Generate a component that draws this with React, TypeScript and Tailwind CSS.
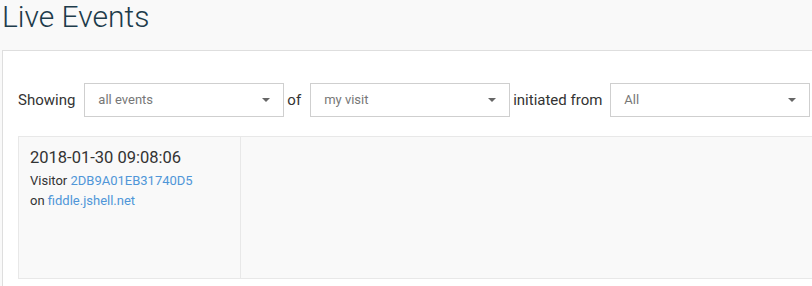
function Select({ value }: { value: string }) {
  return (
    <div className="w-[200px] h-[34px] border border-[#cfcfcf] bg-white flex items-center justify-between pl-[13px] pr-[13px] shrink-0">
      <span className="text-[13px] text-[#777]">{value}</span>
      <span className="w-0 h-0 border-l-[4px] border-r-[4px] border-t-[4px] border-l-transparent border-r-transparent border-t-[#666]" />
    </div>
  );
}

export default function App() {
  return (
    <div className="min-h-[286px] bg-[#f9f9f9] font-['Roboto',sans-serif] overflow-hidden">
      <h1 className="pl-[2px] pt-0 text-[30px] font-light leading-[34px] text-[#1d3c4b] h-[50px]">Live Events</h1>

      <div className="ml-[2px] -mr-[20px] bg-white border border-[#dedede] pl-[15px] pt-[32px] pb-[20px]">
        <div className="flex items-center text-[15px] text-[#333]">
          <span className="mr-[9px]">Showing</span>
          <Select value="all events" />
          <span className="ml-[3px] mr-[9px]">of</span>
          <Select value="my visit" />
          <span className="ml-[3px] mr-[8px]">initiated from</span>
          <Select value="All" />
        </div>

        <div className="mt-[19px] flex h-[143px] border border-[#e8e8e8] bg-[#f9f9f9]">
          <div className="w-[222px] border-r border-[#e8e8e8] pl-[11px] pt-[10px] shrink-0">
            <div className="text-[16.5px] leading-[22px] text-[#333]">2018-01-30 09:08:06</div>
            <div className="mt-[2px] text-[13px] leading-[20px] text-[#333]">
              Visitor <a className="text-[#4f96d8]">2DB9A01EB31740D5</a>
            </div>
            <div className="text-[13px] leading-[20px] text-[#333]">
              on <a className="text-[#4f96d8]">fiddle.jshell.net</a>
            </div>
          </div>
          <div className="flex-1" />
        </div>
      </div>
    </div>
  );
}
